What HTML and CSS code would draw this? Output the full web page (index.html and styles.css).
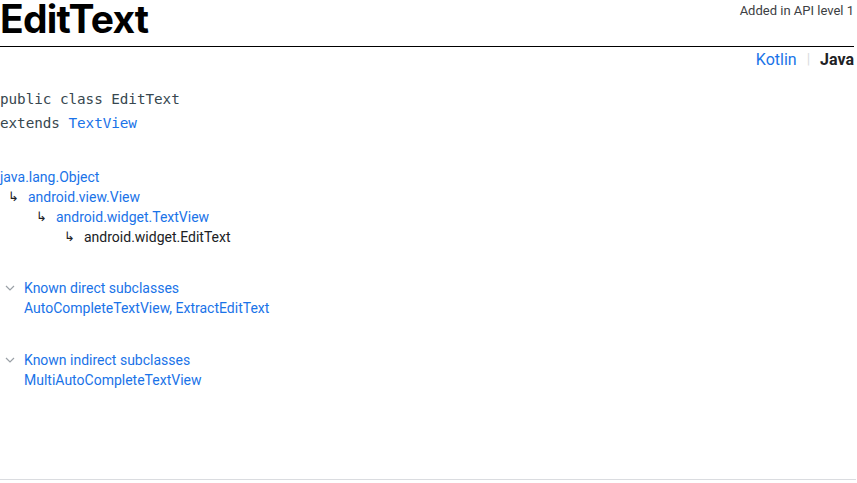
FILE: index.html
```html
<!DOCTYPE html>
<html>
<head>
<meta charset="utf-8">
<link rel="stylesheet" href="styles.css">
</head>
<body>
<div class="page">
  <header class="header">
    <h1 class="title">EditText</h1>
    <span class="api">Added in API level 1</span>
  </header>
  <div class="langs">
    <a class="lang-link">Kotlin</a>
    <span class="sep">|</span>
    <span class="lang-current">Java</span>
  </div>
  <div class="sig">
    <div>public class EditText</div>
    <div>extends <a class="link">TextView</a></div>
  </div>
  <div class="tree">
    <div class="row"><a class="link">java.lang.Object</a></div>
    <div class="row lvl1"><span class="arrow">↳</span><a class="link">android.view.View</a></div>
    <div class="row lvl2"><span class="arrow">↳</span><a class="link">android.widget.TextView</a></div>
    <div class="row lvl3"><span class="arrow">↳</span><span class="plain">android.widget.EditText</span></div>
  </div>
  <div class="sub">
    <div class="sub-head"><svg class="chev" viewBox="0 0 10 6" width="10" height="6"><path d="M1 1 L5 5 L9 1" fill="none" stroke="#9aa0a6" stroke-width="1.2"/></svg><a class="link">Known direct subclasses</a></div>
    <div class="sub-body"><a class="link">AutoCompleteTextView</a><span class="link">, </span><a class="link">ExtractEditText</a></div>
  </div>
  <div class="sub">
    <div class="sub-head"><svg class="chev" viewBox="0 0 10 6" width="10" height="6"><path d="M1 1 L5 5 L9 1" fill="none" stroke="#9aa0a6" stroke-width="1.2"/></svg><a class="link">Known indirect subclasses</a></div>
    <div class="sub-body"><a class="link">MultiAutoCompleteTextView</a></div>
  </div>
  <div class="spacer"></div>
  <div class="footer-line"></div>
</div>
</body>
</html>
```
FILE: styles.css
```css
html, body {
  margin: 0;
  padding: 0;
  background: #fff;
}
body {
  font-family: Roboto, "Liberation Sans", sans-serif;
  color: #202124;
  height: 483px;
  overflow: hidden;
}
.page {
  width: 854px;
  display: flex;
  flex-direction: column;
  height: 483px;
}
.header {
  display: flex;
  justify-content: space-between;
  align-items: flex-start;
  border-bottom: 1px solid #000;
  height: 46px;
}
.title {
  margin: 0;
  font-family: Inter, "Open Sans", sans-serif;
  font-weight: 700;
  font-size: 39px;
  letter-spacing: -0.8px;
  line-height: 38px;
  color: #000;
}
.api {
  font-size: 13px;
  color: #3c4043;
  margin-top: 3px;
  line-height: 16px;
}
.langs {
  display: flex;
  justify-content: flex-end;
  align-items: center;
  gap: 8px;
  font-size: 16px;
  height: 24px;
}
.lang-link { color: #1a73e8; }
.sep { color: #dadce0; font-size: 14px; margin: 0 2px; }
.lang-current { font-weight: 700; color: #202124; }
.sig {
  margin-top: 16px;
  font-family: "DejaVu Sans Mono", "Liberation Mono", monospace;
  font-size: 14.3px;
  line-height: 24px;
  color: #37474f;
  letter-spacing: -0.05px;
}
.link { color: #1a73e8; text-decoration: none; }
.tree {
  margin-top: 32px;
  font-size: 14px;
  line-height: 20px;
}
.row { display: flex; align-items: center; }
.arrow {
  width: 20px;
  color: #202124;
  font-size: 13px;
  padding-left: 8px;
}
.lvl2 { padding-left: 28px; }
.lvl3 { padding-left: 56px; }
.plain { color: #202124; }
.sub {
  margin-top: 31px;
  font-size: 14px;
  line-height: 20px;
}
.sub + .sub { margin-top: 32px; }
.sub-head { display: flex; align-items: center; }
.chev { margin-left: 5px; margin-right: 9px; }
.sub-body { padding-left: 24px; }
.spacer { flex: 1; }
.footer-line {
  height: 1px;
  background: #dadce0;
  margin-bottom: 3px;
  width: 856px;
}
```
